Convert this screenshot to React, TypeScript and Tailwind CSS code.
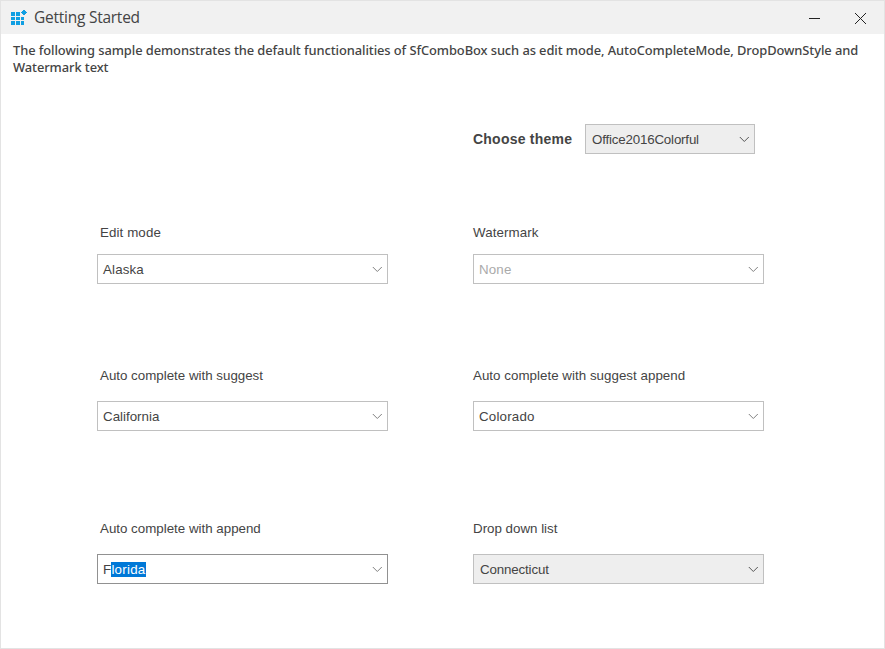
import React from "react";

function Chevron({ color = "#777" }: { color?: string }) {
  return (
    <svg className="shrink-0" width="10" height="6" viewBox="0 0 10 6" fill="none" stroke={color} strokeWidth="1">
      <path d="M0.8 1L5.3 5.5L9.8 1" />
    </svg>
  );
}

type FieldProps = {
  label: string;
  labelClass: string;
  children: React.ReactNode;
  box?: string;
  text?: string;
  dark?: boolean;
};

function Field({ label, labelClass, children, box = "border-[#c0c0c0] bg-white pl-[5px]", text = "tracking-[0.15px]", dark = false }: FieldProps) {
  return (
    <div className="flex w-[291px] flex-col">
      <label className={`h-4 text-[13.33px] leading-4 whitespace-nowrap ${labelClass}`}>{label}</label>
      <div className={`flex h-[30px] items-center justify-between border pr-[5px] ${box}`}>
        <span className={`text-[13.33px] leading-[15px] whitespace-nowrap ${text}`}>{children}</span>
        <Chevron color={dark ? "#555" : "#808080"} />
      </div>
    </div>
  );
}

export default function App() {
  return (
    <div className="flex h-[649px] w-[885px] flex-col border border-[#e3e3e3] bg-white font-['Liberation_Sans',Arial,sans-serif] text-[#444]">
      <header className="flex h-[33px] shrink-0 items-center bg-[#f1f1f1] pl-[10px]">
        <svg width="16" height="15" viewBox="0 0 16 15" fill="#119fe2" shapeRendering="crispEdges">
          <path d="M0 2h4v4H0zM5 2h4v4H5zM0 7h4v3H0zM5 7h4v3H5zM10 7h3v3h-3zM0 11h4v4H0zM5 11h4v4H5zM10 11h3v4h-3z" />
          <path d="M12 0h2v1h1v1h1v1h-1v1h-1v1h-2v-1h-1v-1h-1v-1h1v-1h1z" />
        </svg>
        <h1 className="mb-px ml-[7px] font-['Open_Sans',sans-serif] text-[15.5px] leading-5 tracking-[-0.25px]">Getting Started</h1>
        <svg className="mr-[17px] ml-auto" width="58" height="13" viewBox="0 0 58 13" fill="none" stroke="#222" strokeWidth="1">
          <path d="M0 7.5H11" />
          <path d="M46 2L57 13M57 2L46 13" />
        </svg>
      </header>
      <p className="mt-2 ml-3 h-[34px] font-['Noto_Sans',sans-serif] text-[12.9px] leading-[17px] font-medium tracking-[-0.084px] whitespace-nowrap">
        The following sample demonstrates the default functionalities of SfComboBox such as edit mode, AutoCompleteMode, DropDownStyle and
        <br />
        Watermark text
      </p>
      <div className="mt-[48px] ml-[472px] flex h-[30px] items-center">
        <label className="w-28 text-[14px] leading-4 font-bold tracking-[0.23px] whitespace-nowrap">Choose theme</label>
        <div className="flex h-[30px] w-[170px] items-center justify-between border border-[#c0c0c0] bg-[#eee] pr-[5px] pl-[6px]">
          <span className="mt-[2px] text-[13.33px] leading-4 tracking-[-0.18px]">Office2016Colorful</span>
          <Chevron color="#555" />
        </div>
      </div>
      <main className="mt-[71px] ml-[96px] flex flex-col">
        <section className="flex gap-[85px]">
          <Field label="Edit mode" labelClass="ml-[3px] mb-[13px] tracking-[0.1px]">Alaska</Field>
          <Field label="Watermark" labelClass="mb-[13px] tracking-[0.1px]" text="text-[#aaa] tracking-[0.15px]">None</Field>
        </section>
        <section className="mt-[84px] flex gap-[85px]">
          <Field label="Auto complete with suggest" labelClass="ml-[3px] mb-[17px]" text="">California</Field>
          <Field label="Auto complete with suggest append" labelClass="mb-[17px] tracking-[0.03px]" text="tracking-[0.2px]">Colorado</Field>
        </section>
        <section className="mt-[90px] flex gap-[85px]">
          <Field label="Auto complete with append" labelClass="ml-[3px] mb-[17px]" box="border-[#919191] bg-white pl-[5px]" text="tracking-[0.25px]">
            F<span className="inline-block bg-[#0078d7] text-white">lorida</span>
          </Field>
          <Field label="Drop down list" labelClass="mb-[17px]" box="border-[#c0c0c0] bg-[#eee] pl-[6px]" text="tracking-[-0.15px]" dark>Connecticut</Field>
        </section>
      </main>
    </div>
  );
}
